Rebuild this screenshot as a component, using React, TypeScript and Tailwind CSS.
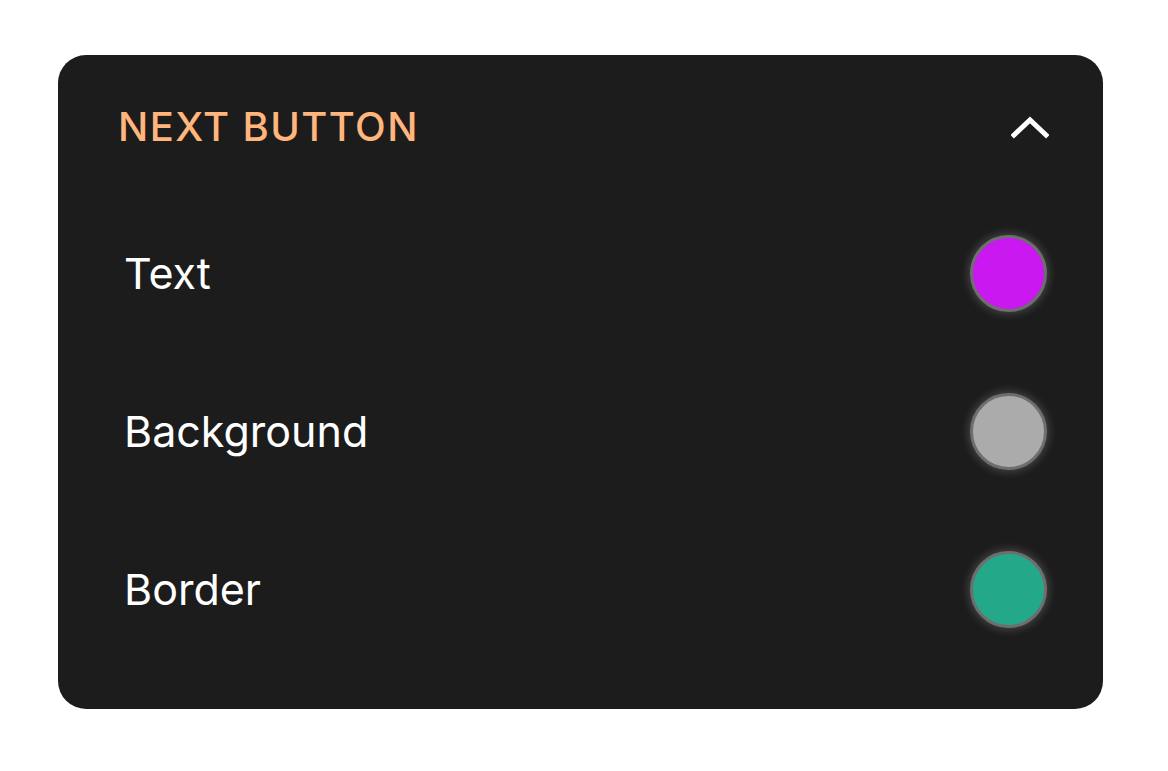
export default function App() {
  const rows = [
    { label: "Text", color: "bg-[#c918f0]" },
    { label: "Background", color: "bg-[#ababab]" },
    { label: "Border", color: "bg-[#23a98a]" },
  ];
  return (
    <div className="min-h-[771px] w-[1168px] bg-white pl-[58px] pt-[55px]" style={{ fontFamily: "Inter, 'Noto Sans', sans-serif" }}>
      <div className="flex h-[654px] w-[1045px] flex-col rounded-[28px] bg-[#1c1c1c] pb-[41px] pt-[42px]">
        <div className="flex h-[60px] items-center justify-between pl-[60px] pr-[54px]">
          <span className="text-[40px] font-medium tracking-[0.035em] text-[#ffb57b]">NEXT BUTTON</span>
          <svg width="38" height="24" viewBox="0 0 38 24" fill="none">
            <path d="M3 20 L19 5 L35 20" stroke="white" strokeWidth="5" strokeLinecap="square" strokeLinejoin="miter" />
          </svg>
        </div>
        <div className="mt-[37px] flex flex-col">
          {rows.map((r) => (
            <div key={r.label} className="flex h-[158px] items-center justify-between pl-[66px] pr-[56px]">
              <span className="text-[43px] font-normal text-white">{r.label}</span>
              <div className={`h-[77px] w-[77px] rounded-full border-[3px] border-[#6e6e6e] ${r.color} shadow-[0_0_8px_2px_rgba(255,255,255,0.18)]`} />
            </div>
          ))}
        </div>
      </div>
    </div>
  );
}
